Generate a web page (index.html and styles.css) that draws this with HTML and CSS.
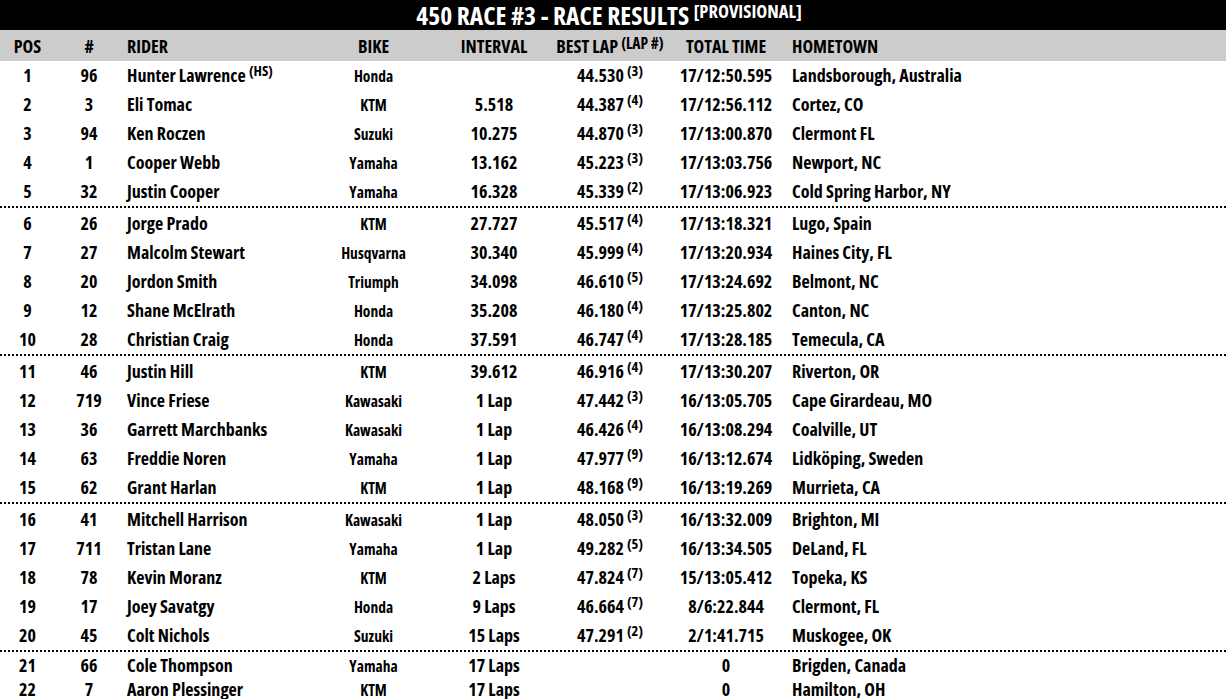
FILE: index.html
```html
<!DOCTYPE html>
<html>
<head>
<meta charset="utf-8">
<link rel="stylesheet" href="styles.css">
</head>
<body>
<div class="title">450 RACE #3 - RACE RESULTS <sup class="prov">[PROVISIONAL]</sup></div>
<div class="row head">
  <div class="c pos">POS</div>
  <div class="c num">#</div>
  <div class="c rider">RIDER</div>
  <div class="c bike hbike">BIKE</div>
  <div class="c intv">INTERVAL</div>
  <div class="c best">BEST LAP <sup class="hsup">(LAP #)</sup></div>
  <div class="c total">TOTAL TIME</div>
  <div class="c home">HOMETOWN</div>
</div>
<div id="rows"></div>
<script src="app.js"></script>
</body>
</html>
```
FILE: app.js
```js
const data = [
["1","96","Hunter Lawrence","HS","Honda","","44.530","3","17/12:50.595","Landsborough, Australia"],
["2","3","Eli Tomac","","KTM","5.518","44.387","4","17/12:56.112","Cortez, CO"],
["3","94","Ken Roczen","","Suzuki","10.275","44.870","3","17/13:00.870","Clermont FL"],
["4","1","Cooper Webb","","Yamaha","13.162","45.223","3","17/13:03.756","Newport, NC"],
["5","32","Justin Cooper","","Yamaha","16.328","45.339","2","17/13:06.923","Cold Spring Harbor, NY"],
["6","26","Jorge Prado","","KTM","27.727","45.517","4","17/13:18.321","Lugo, Spain"],
["7","27","Malcolm Stewart","","Husqvarna","30.340","45.999","4","17/13:20.934","Haines City, FL"],
["8","20","Jordon Smith","","Triumph","34.098","46.610","5","17/13:24.692","Belmont, NC"],
["9","12","Shane McElrath","","Honda","35.208","46.180","4","17/13:25.802","Canton, NC"],
["10","28","Christian Craig","","Honda","37.591","46.747","4","17/13:28.185","Temecula, CA"],
["11","46","Justin Hill","","KTM","39.612","46.916","4","17/13:30.207","Riverton, OR"],
["12","719","Vince Friese","","Kawasaki","1 Lap","47.442","3","16/13:05.705","Cape Girardeau, MO"],
["13","36","Garrett Marchbanks","","Kawasaki","1 Lap","46.426","4","16/13:08.294","Coalville, UT"],
["14","63","Freddie Noren","","Yamaha","1 Lap","47.977","9","16/13:12.674","Lidköping, Sweden"],
["15","62","Grant Harlan","","KTM","1 Lap","48.168","9","16/13:19.269","Murrieta, CA"],
["16","41","Mitchell Harrison","","Kawasaki","1 Lap","48.050","3","16/13:32.009","Brighton, MI"],
["17","711","Tristan Lane","","Yamaha","1 Lap","49.282","5","16/13:34.505","DeLand, FL"],
["18","78","Kevin Moranz","","KTM","2 Laps","47.824","7","15/13:05.412","Topeka, KS"],
["19","17","Joey Savatgy","","Honda","9 Laps","46.664","7","8/6:22.844","Clermont, FL"],
["20","45","Colt Nichols","","Suzuki","15 Laps","47.291","2","2/1:41.715","Muskogee, OK"],
["21","66","Cole Thompson","","Yamaha","17 Laps","","","0","Brigden, Canada"],
["22","7","Aaron Plessinger","","KTM","17 Laps","","","0","Hamilton, OH"]
];
const root = document.getElementById("rows");
data.forEach((d, i) => {
  const r = document.createElement("div");
  r.className = "row" + (i >= 20 ? " tight" : "");
  const rider = d[2] + (d[3] ? ' <sup>(' + d[3] + ')</sup>' : '');
  const best = d[6] ? d[6] + ' <sup>(' + d[7] + ')</sup>' : '';
  r.innerHTML =
    '<div class="c pos">' + d[0] + '</div>' +
    '<div class="c num">' + d[1] + '</div>' +
    '<div class="c rider">' + rider + '</div>' +
    '<div class="c bike">' + d[4] + '</div>' +
    '<div class="c intv">' + d[5] + '</div>' +
    '<div class="c best">' + best + '</div>' +
    '<div class="c total">' + d[8] + '</div>' +
    '<div class="c home">' + d[9] + '</div>';
  root.appendChild(r);
  if (i % 5 === 4) {
    const s = document.createElement("div");
    s.className = "sep";
    root.appendChild(s);
  }
});
```
FILE: styles.css
```css
html, body {
  margin: 0;
  padding: 0;
  background: #fff;
}
body {
  font-family: "Open Sans", "DejaVu Sans Condensed", sans-serif;
  font-stretch: 75%;
  font-weight: 700;
  color: #000;
  width: 1226px;
  overflow: hidden;
}
.title {
  background: #000;
  color: #fff;
  height: 30px;
  line-height: 30px;
  text-align: center;
  font-size: 25.5px;
  padding-right: 8px;
}
.title .prov {
  font-size: 18.5px;
  vertical-align: 7px;
  line-height: 0;
}
.row {
  display: grid;
  grid-template-columns: 55px 68px 190px 121px 120px 112px 120px 1fr;
  height: 29px;
  box-sizing: border-box;
  padding-bottom: 2px;
  align-items: center;
  font-size: 18px;
  white-space: nowrap;
}
.row.tight {
  height: 24px;
}
.row.head {
  background: #cccccc;
  height: 31px;
  padding-bottom: 0;
  font-size: 18px;
}
.c {
  text-align: center;
}
.rider, .home {
  text-align: left;
  padding-left: 4px;
}
.home {
  padding-left: 6px;
}
.bike {
  font-size: 15.5px;
  padding-top: 2px;
}
.bike.hbike {
  font-size: 18px;
  padding-top: 0;
}
sup {
  font-size: 14.5px;
  line-height: 0;
  vertical-align: 6px;
}
sup.hsup {
  font-size: 15.5px;
  vertical-align: 4px;
}
.sep {
  height: 3px;
  border-top: 2px dotted #000;
  box-sizing: border-box;
}
```
